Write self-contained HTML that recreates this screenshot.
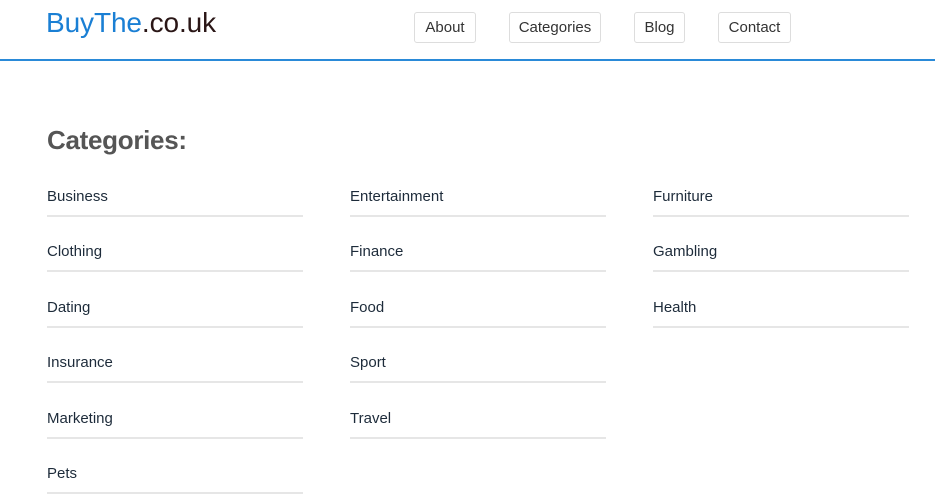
<!DOCTYPE html>
<html><head><style>
body{margin:0;width:935px;height:495px;overflow:hidden;background:#fff;font-family:"Liberation Sans",sans-serif;}
.hdr{position:absolute;left:0;top:0;width:935px;height:59px;border-bottom:2px solid #2a8ad8;}
.logo{position:absolute;left:46px;top:7px;font-size:28px;color:#2a1616;letter-spacing:-0.1px}
.logo span{color:#1a7fd4}
.btn{position:absolute;top:12px;border:1px solid #ddd;border-radius:3px;font-size:15px;color:#333;line-height:29px;text-align:center;box-sizing:border-box;height:31px}
h1{position:absolute;left:47px;top:125px;margin:0;font-size:26px;font-weight:bold;color:#555;letter-spacing:-0.3px}
.it{position:absolute;width:256px;height:35px;border-bottom:2px solid #e6e6e6;font-size:15px;color:#1d2b3a;line-height:34px}
</style></head><body>
<div class="hdr">
<div class="logo"><span>BuyThe</span>.co.uk</div>
<div class="btn" style="left:414px;width:62px">About</div>
<div class="btn" style="left:509px;width:92px">Categories</div>
<div class="btn" style="left:634px;width:51px">Blog</div>
<div class="btn" style="left:718px;width:73px">Contact</div>
</div>
<h1>Categories:</h1>
<div class="it" style="left:47px;top:180px">Business</div>
<div class="it" style="left:47px;top:235px">Clothing</div>
<div class="it" style="left:47px;top:291px">Dating</div>
<div class="it" style="left:47px;top:346px">Insurance</div>
<div class="it" style="left:47px;top:402px">Marketing</div>
<div class="it" style="left:47px;top:457px">Pets</div>
<div class="it" style="left:350px;top:180px">Entertainment</div>
<div class="it" style="left:350px;top:235px">Finance</div>
<div class="it" style="left:350px;top:291px">Food</div>
<div class="it" style="left:350px;top:346px">Sport</div>
<div class="it" style="left:350px;top:402px">Travel</div>
<div class="it" style="left:653px;top:180px">Furniture</div>
<div class="it" style="left:653px;top:235px">Gambling</div>
<div class="it" style="left:653px;top:291px">Health</div>
</body></html>
